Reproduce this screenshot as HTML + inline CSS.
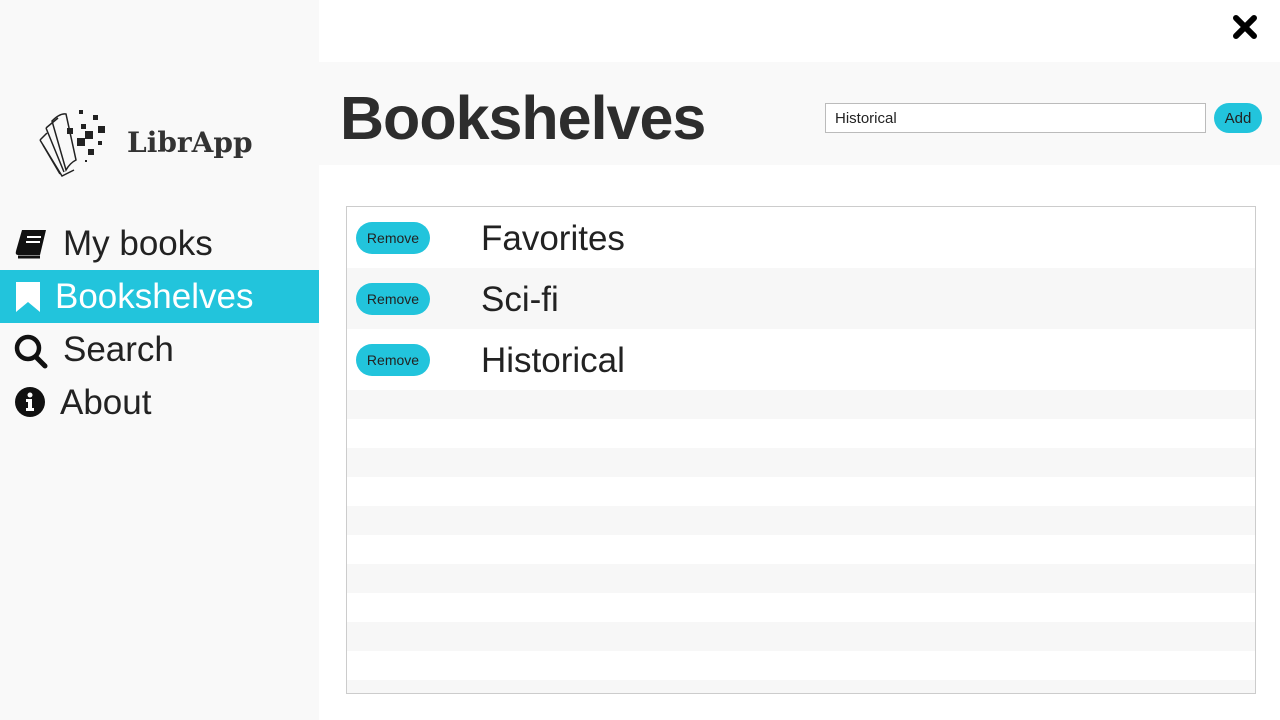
<!DOCTYPE html>
<html><head><style>
body{margin:0;width:1280px;height:720px;position:relative;overflow:hidden;background:#fff;font-family:"Segoe UI","Liberation Sans",sans-serif;color:#222}
.side{position:absolute;left:0;top:0;width:319px;height:720px;background:#f9f9f9}
.nav{position:absolute;left:0;width:319px;height:53px;font-size:35px;line-height:53px}
.nav svg{position:absolute;left:14px;top:10px}
.nav span{position:absolute;top:0px}
.hdr{position:absolute;left:319px;top:62px;width:961px;height:103px;background:#f9f9f9}
h1{position:absolute;left:340px;top:83px;margin:0;font-size:61px;font-weight:bold;color:#2d2d2d;letter-spacing:-1px}
.inp{position:absolute;left:825px;top:103px;border:1px solid #bbb;background:#fff;font-size:15px;line-height:29px;box-sizing:border-box;padding-left:9px;height:30px;width:381px}
.add{position:absolute;left:1214px;top:103px;width:48px;height:30px;border-radius:15px;background:#22c4dc;font-size:15px;text-align:center;line-height:31px}
.box{position:absolute;left:346px;top:206px;width:908px;height:486px;border:1px solid #ccc;overflow:hidden}
.row{position:absolute;left:0;width:908px}
.g{background:#f7f7f7}
.rm{position:absolute;left:9px;top:15px;width:74px;height:32px;border-radius:16px;background:#22c4dc;font-size:14px;text-align:center;line-height:32px}
.lbl{position:absolute;left:134px;top:8px;font-size:35px;line-height:48px}
</style></head><body>
<div class="side">
<svg style="position:absolute;left:0;top:0" width="120" height="190" viewBox="0 0 120 190">
<g fill="none" stroke="#222" stroke-width="1.5">
<path d="M52 121 Q60 113 66 114 L76 160 Q70 163 66 170 Z"/>
<path d="M46 128 L58 118 M46 128 L64 172"/>
<path d="M40 140 L47 133 M40 140 L62 176 L74 170"/>
<path d="M43 145 L60 174"/>
</g>
<g fill="#222"><rect x="79" y="110" width="4" height="4"/><rect x="93" y="115" width="5" height="5"/><rect x="81" y="124" width="5" height="5"/><rect x="67" y="128" width="6" height="6"/><rect x="98" y="126" width="7" height="7"/><rect x="85" y="131" width="8" height="8"/><rect x="77" y="138" width="8" height="8"/><rect x="98" y="141" width="4" height="4"/><rect x="88" y="149" width="6" height="6"/><rect x="85" y="160" width="2" height="2"/></g>
</svg>
<div style="position:absolute;left:127px;top:126px;font-family:'DejaVu Serif','Liberation Serif',serif;font-weight:bold;font-size:28px;color:#333">LibrApp</div>
<div class="nav" style="top:217px"><svg width="34" height="34" viewBox="0 0 34 34"><path d="M8 3 H32 L26 28 H4 Q1 28 2 24 Z" fill="#111"/><path d="M4 30 H26" stroke="#111" stroke-width="3"/><path d="M13 10 H27 M12 15 H26" stroke="#fff" stroke-width="2"/></svg><span style="left:63px">My books</span></div>
<div class="nav" style="top:270px;background:#22c4dc;color:#fff"><svg width="28" height="34" viewBox="0 0 28 34"><path d="M2 2 H26 V32 L14 22 L2 32 Z" fill="#fff"/></svg><span style="left:55px">Bookshelves</span></div>
<div class="nav" style="top:323px"><svg width="34" height="36" viewBox="0 0 34 36"><circle cx="14" cy="15" r="11" fill="none" stroke="#111" stroke-width="4.5"/><path d="M22 24 L31 33" stroke="#111" stroke-width="5" stroke-linecap="round"/></svg><span style="left:63px">Search</span></div>
<div class="nav" style="top:376px"><svg width="32" height="32" viewBox="0 0 32 32"><circle cx="16" cy="16" r="15" fill="#111"/><circle cx="16" cy="9" r="2.5" fill="#fff"/><path d="M12 13 H18 V22 H20 V25 H12 V22 H14 V16 H12 Z" fill="#fff"/></svg><span style="left:60px">About</span></div>
</div>
<svg style="position:absolute;left:1232px;top:14px" width="26" height="26" viewBox="0 0 26 26"><path d="M4 4 L22 22 M22 4 L4 22" stroke="#000" stroke-width="6" stroke-linecap="round"/></svg>
<div class="hdr"></div>
<h1>Bookshelves</h1>
<div class="inp">Historical</div>
<div class="add">Add</div>
<div class="box">
<div class="row" style="top:0;height:61px"><div class="rm">Remove</div><div class="lbl">Favorites</div></div>
<div class="row g" style="top:61px;height:61px"><div class="rm">Remove</div><div class="lbl">Sci-fi</div></div>
<div class="row" style="top:122px;height:61px"><div class="rm">Remove</div><div class="lbl">Historical</div></div>
<div class="row g" style="top:183px;height:29px"></div>
<div class="row g" style="top:241px;height:29px"></div>
<div class="row g" style="top:299px;height:29px"></div>
<div class="row g" style="top:357px;height:29px"></div>
<div class="row g" style="top:415px;height:29px"></div>
<div class="row g" style="top:473px;height:29px"></div>
</div>
</body></html>
